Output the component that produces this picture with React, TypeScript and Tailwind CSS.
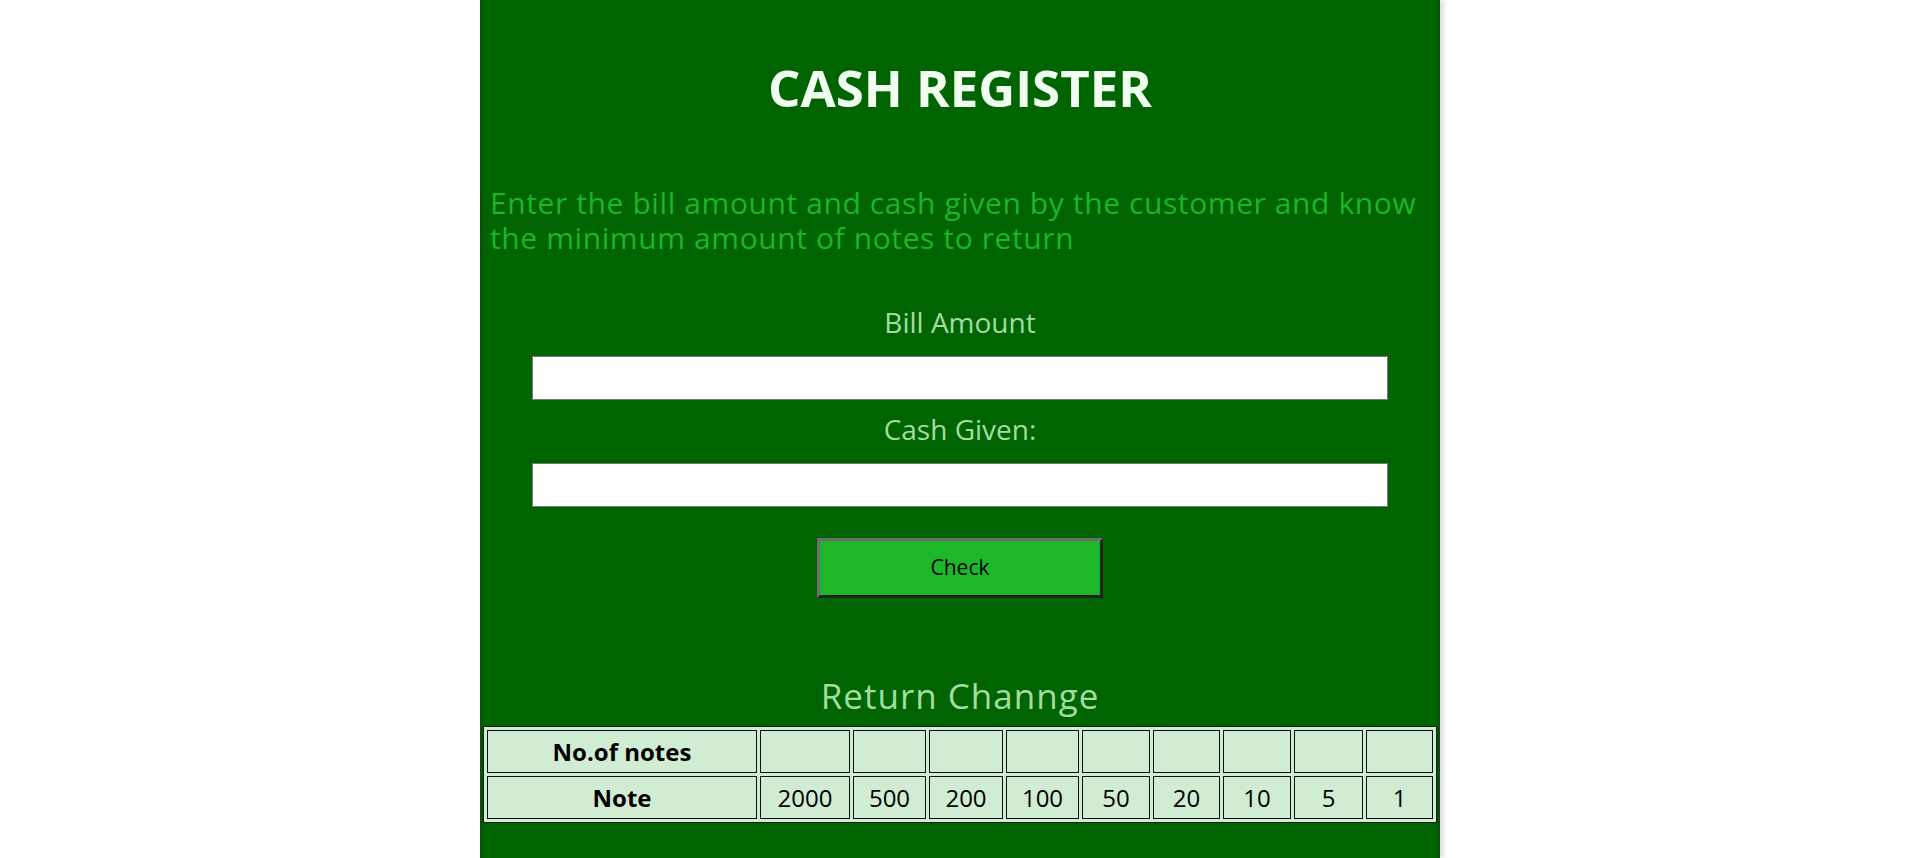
import { useState } from 'react';

const NOTES = [2000, 500, 200, 100, 50, 20, 10, 5, 1];

// column widths measured off the reference, last one takes what is left
const COL_W = ['w-[90px]', 'w-[73px]', 'w-[74px]', 'w-[73px]', 'w-[68px]', 'w-[67px]', 'w-[68px]', 'w-[69px]', ''];

export default function App() {
  const [bill, setBill] = useState('');
  const [cash, setCash] = useState('');

  return (
    <div className="min-h-screen bg-white font-['Open_Sans','Noto_Sans',sans-serif]">
      <main className="ml-[480px] w-[960px] min-h-screen bg-[#006400] border-x-[3px] border-[#0a4f0a] shadow-[4px_0_4px_rgba(0,0,0,0.12)] flex flex-col items-center">
        <h1 className="mt-[52px] text-[51px] leading-[70px] font-bold text-[#f0fff0]">CASH REGISTER</h1>

        <p className="mt-[63px] self-stretch px-[7px] text-[30px] leading-[35px] tracking-[0.6px] text-[#1cb52a]">
          Enter the bill amount and cash given by the customer and know the minimum amount of notes to return
        </p>

        <label htmlFor="bill" className="mt-[48px] text-[28px] leading-[38px] text-[#a3dca3]">
          Bill Amount
        </label>
        <input
          id="bill"
          type="number"
          value={bill}
          onChange={e => setBill(e.target.value)}
          className="mt-[15px] h-[44px] w-[856px] border border-[#767676] bg-white px-2 text-xl outline-none"
        />

        <label htmlFor="cash" className="mt-[10px] text-[28px] leading-[38px] text-[#a3dca3]">
          Cash Given:
        </label>
        <input
          id="cash"
          type="number"
          value={cash}
          onChange={e => setCash(e.target.value)}
          className="mt-[15px] h-[44px] w-[856px] border border-[#767676] bg-white px-2 text-xl outline-none"
        />

        <button
          type="button"
          className="mt-[31px] h-[60px] w-[286px] border-[3px] border-t-[#6e6e6e] border-l-[#6e6e6e] border-b-[#222222] border-r-[#222222] bg-[#1cb82a] text-[21px] text-black"
        >
          Check
        </button>

        <h2 className="mt-[74px] text-[35px] leading-[48px] tracking-[1px] text-[#a3dca3]">Return Channge</h2>

        <table className="mt-[6px] w-full table-fixed border-separate border-spacing-[3px] border border-[#1a1a1a] bg-[#d0edd3] text-[24px] text-black">
          <tbody>
            <tr className="h-[43px]">
              <th className="w-[270px] border border-[#111] font-bold">No.of notes</th>
              {NOTES.map((n, i) => (
                <td key={n} className={`${COL_W[i]} border border-[#111]`} />
              ))}
            </tr>
            <tr className="h-[43px]">
              <th className="border border-[#111] font-bold">Note</th>
              {NOTES.map(n => (
                <td key={n} className="border border-[#111] text-center">
                  {n}
                </td>
              ))}
            </tr>
          </tbody>
        </table>
      </main>
    </div>
  );
}
